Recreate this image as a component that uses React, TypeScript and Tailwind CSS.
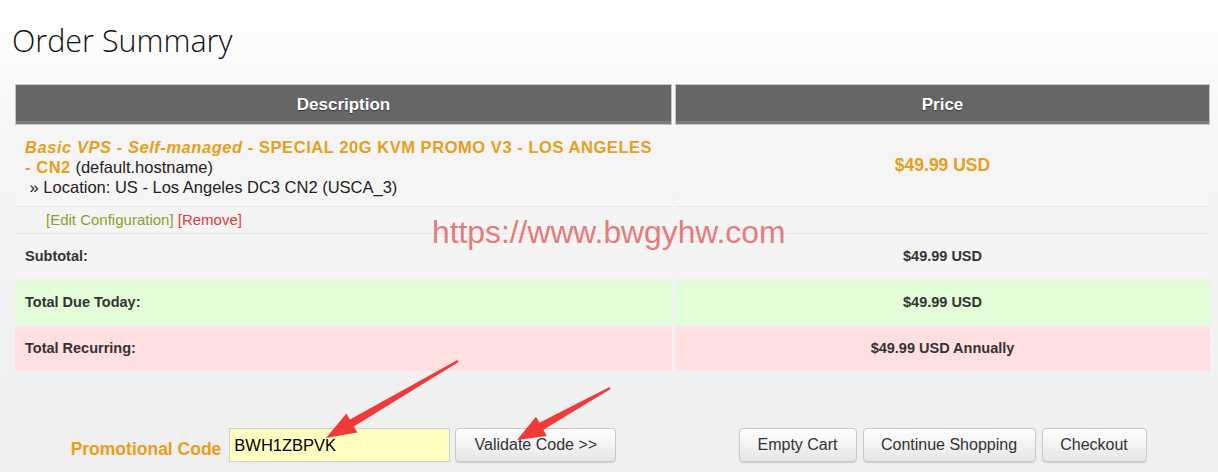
const ORANGE = "text-[#e89f1a]";

const TOTALS = [
  { label: "Subtotal:", value: "$49.99 USD", row: "bg-[#f4f4f4] border-t border-[#e6e6e6]" },
  { label: "Total Due Today:", value: "$49.99 USD", row: "bg-[#e3fdd8] border-t-2 border-[#efefef]" },
  { label: "Total Recurring:", value: "$49.99 USD Annually", row: "bg-[#ffdfdf] border-t-2 border-[#efefef]" },
];

function Btn({ children, w }: { children: React.ReactNode; w: string }) {
  return (
    <button
      type="button"
      className={`${w} h-[34px] rounded-[4px] border border-[#c9c9c9] bg-gradient-to-b from-white to-[#e6e6e6] text-[16px] text-[#333] shadow-[0_1px_1px_rgba(0,0,0,0.12)]`}
    >
      {children}
    </button>
  );
}

export default function App() {
  return (
    <div className="relative min-h-screen bg-[linear-gradient(to_bottom,#ffffff_0px,#f6f6f6_140px,#f0efef_472px)] font-['Liberation_Sans',Arial,sans-serif] text-[#333]">
      <div className="h-[84px] pt-[25px] pl-[12px]">
        <h1 className="font-['Open_Sans',sans-serif] text-[30.5px] font-light leading-none text-[#111]">
          Order Summary
        </h1>
      </div>

      <div className="pl-[12px] pr-[5px]">
        <table className="w-full border-separate border-spacing-x-[3px] border-spacing-y-0">
          <thead>
            <tr>
              <th className="h-[41px] w-[657px] border border-[#c4c4c4] bg-[#666] text-[17px] font-bold text-white shadow-[inset_0_-3px_0_#7b7b7b] [text-shadow:0_1px_1px_rgba(0,0,0,0.45)]">
                Description
              </th>
              <th className="h-[41px] border border-[#c4c4c4] bg-[#666] text-[17px] font-bold text-white shadow-[inset_0_-3px_0_#7b7b7b] [text-shadow:0_1px_1px_rgba(0,0,0,0.45)]">
                Price
              </th>
            </tr>
          </thead>
          <tbody>
            <tr>
              <td className="bg-[#f5f5f5] pl-[10px] pt-[12px] pb-[9px] text-[16.5px] leading-[20px] text-[#222]">
                <span className={`font-bold tracking-[0.55px] ${ORANGE}`}>
                  <i>Basic VPS - Self-managed</i> - SPECIAL 20G KVM PROMO V3 - LOS ANGELES
                  <br />- CN2
                </span>{" "}
                (default.hostname)
                <br />
                {"\u00a0"}» Location: US - Los Angeles DC3 CN2 (USCA_3)
              </td>
              <td className={`bg-[#f5f5f5] text-center text-[17.5px] font-bold ${ORANGE}`}>
                $49.99 USD
              </td>
            </tr>
            <tr>
              <td className="border-t border-[#e6e6e6] bg-[#f4f4f4] py-[3px] pl-[31px] text-[15px] leading-[20px]">
                <span className="text-[#8f9e2c]">[Edit Configuration]</span>{" "}
                <span className="text-[#e03b3b]">[Remove]</span>
              </td>
              <td className="border-t border-[#e6e6e6] bg-[#f4f4f4]" />
            </tr>
            {TOTALS.map((t) => (
              <tr key={t.label}>
                <td className={`h-[46px] pl-[10px] text-[14.5px] font-bold ${t.row}`}>{t.label}</td>
                <td className={`h-[46px] text-center text-[14.5px] font-bold ${t.row}`}>{t.value}</td>
              </tr>
            ))}
          </tbody>
        </table>
      </div>

      <div className="mt-[57px] grid grid-cols-[657px_1fr] gap-x-[3px] pl-[15px] pr-[8px]">
        <div className="flex items-center justify-center">
          <span className={`mr-[8px] pt-[8px] text-[17.5px] font-bold ${ORANGE}`}>Promotional Code</span>
          <input
            readOnly
            value="BWH1ZBPVK"
            className="h-[34px] w-[221px] border border-[#cfcfcf] bg-[#ffffc2] px-[4px] text-[16.5px] text-black outline-none"
          />
          <div className="ml-[5px]">
            <Btn w="w-[161px]">Validate Code &gt;&gt;</Btn>
          </div>
        </div>
        <div className="flex items-center justify-center gap-[6px]">
          <Btn w="w-[118px]">Empty Cart</Btn>
          <Btn w="w-[173px]">Continue Shopping</Btn>
          <Btn w="w-[105px]">Checkout</Btn>
        </div>
      </div>

      {/* watermark */}
      <div className="pointer-events-none absolute left-[432px] top-[217px] text-[31.8px] leading-none text-[#e57b7b]">
        https://www.bwgyhw.com
      </div>

      {/* red arrows */}
      <svg className="pointer-events-none absolute left-0 top-0" width="1218" height="472">
        <polygon
          points="457.5,360.1 349.9,419.4 346.4,413.4 326,438 357.4,432.4 353.9,426.4 458.5,361.9"
          fill="#f03a3a"
        />
        <polygon
          points="609.5,387.1 539.4,422.8 536,416.7 517,440 546.8,435.9 543.4,429.8 610.5,388.9"
          fill="#f03a3a"
        />
      </svg>
    </div>
  );
}
